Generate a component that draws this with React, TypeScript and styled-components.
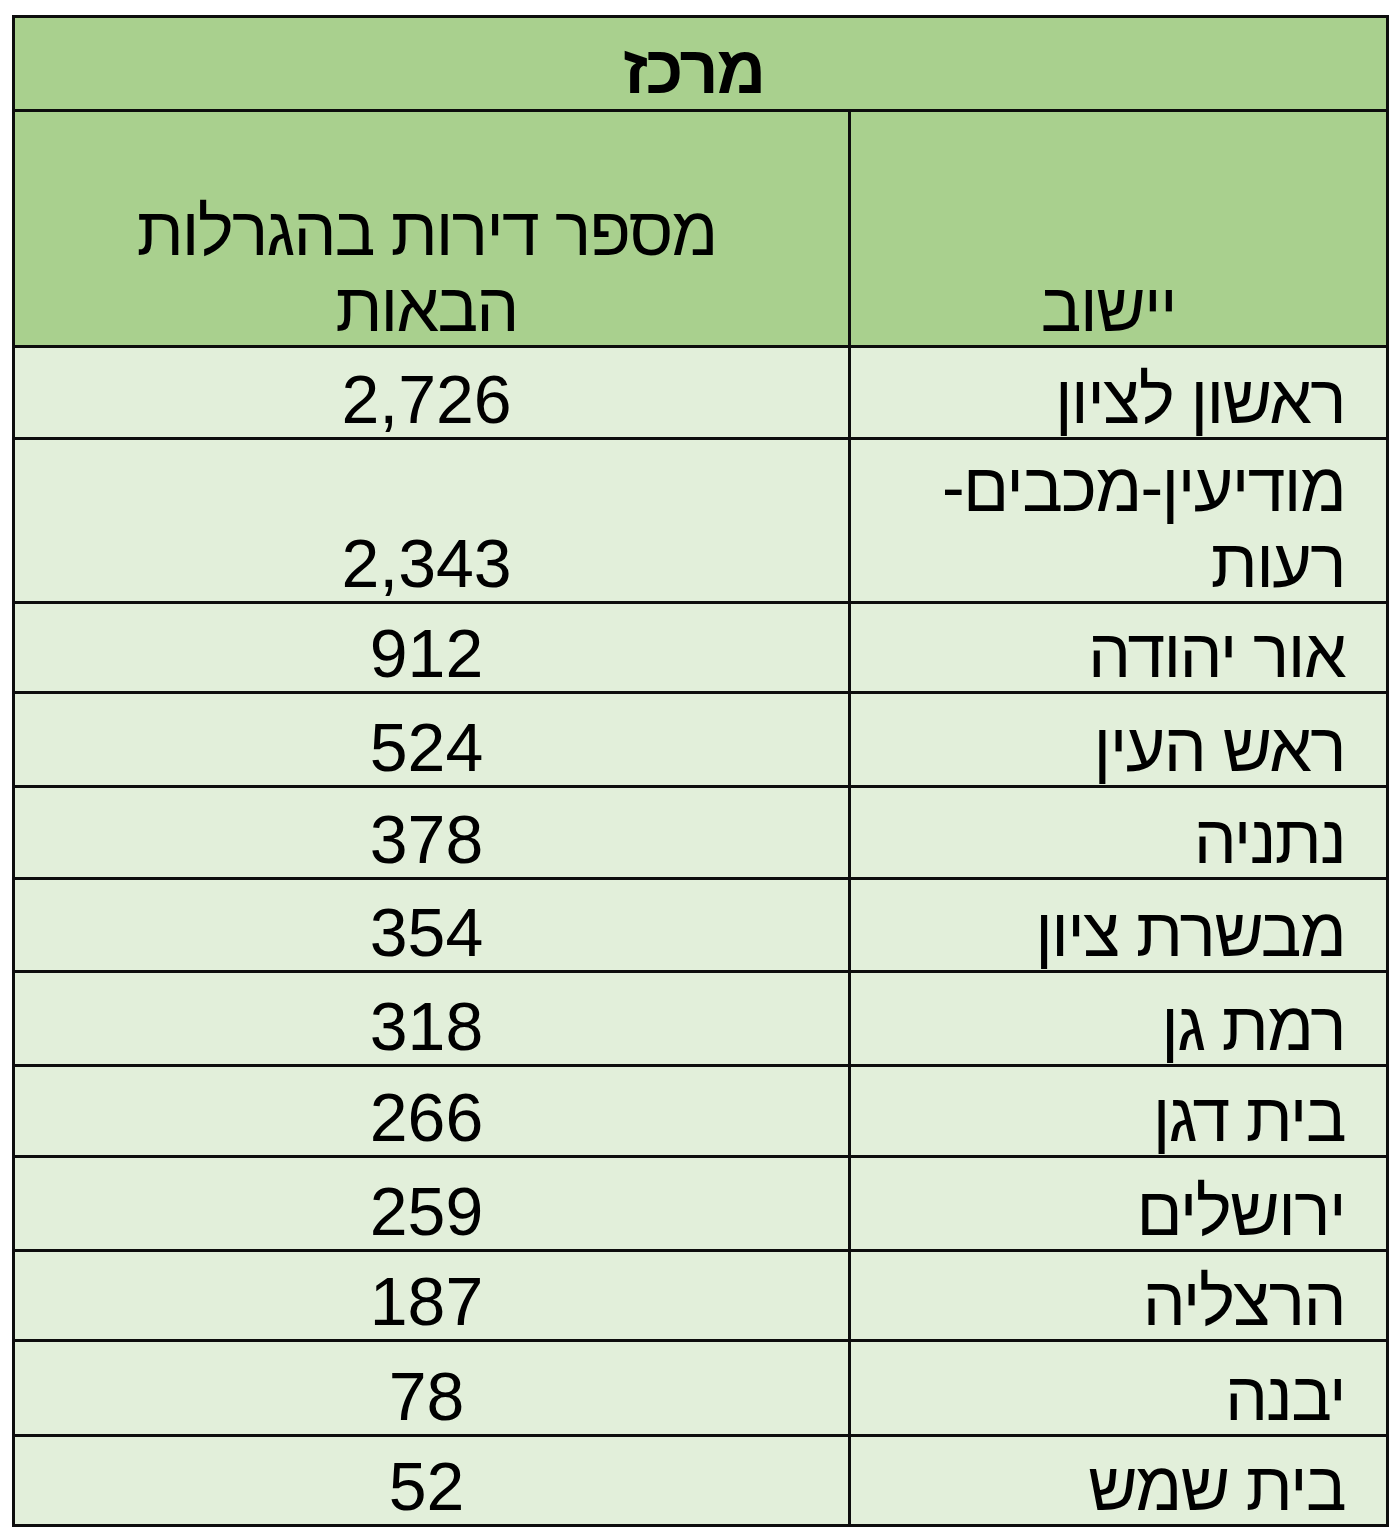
import React from 'react';
import styled, { createGlobalStyle } from 'styled-components';

const GlobalStyle = createGlobalStyle`
  html, body {
    margin: 0;
    padding: 0;
    background: #ffffff;
  }
  body {
    font-family: "Liberation Sans", Arial, sans-serif;
    color: #000;
  }
`;

const Page = styled.div`
  padding: 15px 0 0 12px;
`;

const Table = styled.table`
  width: 1374px;
  border-collapse: collapse;
  direction: rtl;
  table-layout: fixed;
  font-family: "Liberation Sans", Arial, sans-serif;
  font-size: 68px;
  line-height: 76px;
  color: #000;
`;

const Row = styled.tr<{ h: number }>`
  height: ${p => p.h}px;
`;

const Cell = styled.td<{ head?: boolean }>`
  border: 3px solid #0d0d0d;
  background-color: ${p => (p.head ? '#a9d08e' : '#e2efda')};
  vertical-align: bottom;
  padding: 0 10px;
  overflow: hidden;
`;

const TitleCell = styled(Cell)`
  text-align: center;
  font-weight: bold;
  letter-spacing: -2px;
  padding: 0 14px 2px 0;
`;

const NameCell = styled(Cell)`
  text-align: right;
  letter-spacing: -1.6px;
  padding: 0 41px 0 10px;
`;

const CenterCell = styled(Cell)`
  text-align: center;
  padding: 0 10px 0 0;
`;

const HeadTextCell = styled(CenterCell)`
  letter-spacing: -1.8px;
`;

const HeadNameCell = styled(Cell)`
  text-align: center;
  letter-spacing: -1.6px;
  padding: 0 20px 0 0;
`;

const rows: { name: React.ReactNode; key: string; count: string; h: number }[] = [
  { key: 'rishon', name: 'ראשון לציון', count: '2,726', h: 92 },
  {
    key: 'modiin',
    name: (
      <>
        מודיעין-מכבים-
        <br />
        רעות
      </>
    ),
    count: '2,343',
    h: 164,
  },
  { key: 'or', name: 'אור יהודה', count: '912', h: 90 },
  { key: 'rosh', name: 'ראש העין', count: '524', h: 94 },
  { key: 'netanya', name: 'נתניה', count: '378', h: 92 },
  { key: 'mevaseret', name: 'מבשרת ציון', count: '354', h: 93 },
  { key: 'ramat', name: 'רמת גן', count: '318', h: 94 },
  { key: 'dagan', name: 'בית דגן', count: '266', h: 91 },
  { key: 'jerusalem', name: 'ירושלים', count: '259', h: 94 },
  { key: 'herzliya', name: 'הרצליה', count: '187', h: 90 },
  { key: 'yavne', name: 'יבנה', count: '78', h: 95 },
  { key: 'shemesh', name: 'בית שמש', count: '52', h: 90 },
];

const App: React.FC = () => {
  return (
    <>
      <GlobalStyle />
      <Page>
        <Table dir="rtl">
          <colgroup>
            <col style={{ width: '538px' }} />
            <col style={{ width: '836px' }} />
          </colgroup>
          <tbody>
            <Row h={94}>
              <TitleCell head colSpan={2}>מרכז</TitleCell>
            </Row>
            <Row h={236}>
              <HeadNameCell head>יישוב</HeadNameCell>
              <HeadTextCell head>
                מספר דירות בהגרלות
                <br />
                הבאות
              </HeadTextCell>
            </Row>
            {rows.map(r => (
              <Row key={r.key} h={r.h}>
                <NameCell>{r.name}</NameCell>
                <CenterCell>{r.count}</CenterCell>
              </Row>
            ))}
          </tbody>
        </Table>
      </Page>
    </>
  );
};

export default App;
